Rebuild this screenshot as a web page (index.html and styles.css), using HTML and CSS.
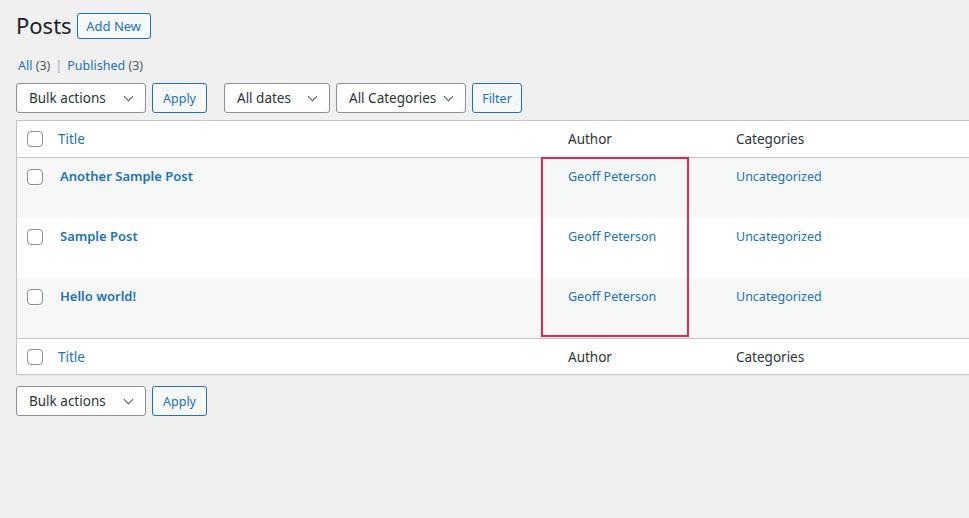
FILE: index.html
```html
<!DOCTYPE html>
<html>
<head>
<meta charset="utf-8">
<link rel="stylesheet" href="styles.css">
</head>
<body>
<div class="wrap">
  <div class="head">
    <h1 class="title">Posts</h1>
    <a class="btn btn-add">Add New</a>
  </div>
  <div class="subsub">
    <a class="lnk">All <span class="count">(3)</span></a>
    <span class="sep">|</span>
    <a class="lnk">Published <span class="count">(3)</span></a>
  </div>
  <div class="tablenav">
    <div class="sel w130">Bulk actions<span class="chev"></span></div>
    <a class="btn btn-apply">Apply</a>
    <div class="gap"></div>
    <div class="sel w106">All dates<span class="chev"></span></div>
    <div class="sel w130">All Categories<span class="chev"></span></div>
    <a class="btn btn-filter">Filter</a>
  </div>
  <div class="tablebox">
    <div class="row hdr">
      <div class="c-cb"><span class="cb"></span></div>
      <div class="c-title"><a class="lnk">Title</a></div>
      <div class="c-author">Author</div>
      <div class="c-cat">Categories</div>
    </div>
    <div class="row post alt">
      <div class="c-cb"><span class="cb"></span></div>
      <div class="c-title"><a class="lnk strong">Another Sample Post</a></div>
      <div class="c-author"><a class="lnk">Geoff Peterson</a></div>
      <div class="c-cat"><a class="lnk">Uncategorized</a></div>
    </div>
    <div class="row post">
      <div class="c-cb"><span class="cb"></span></div>
      <div class="c-title"><a class="lnk strong">Sample Post</a></div>
      <div class="c-author"><a class="lnk">Geoff Peterson</a></div>
      <div class="c-cat"><a class="lnk">Uncategorized</a></div>
    </div>
    <div class="row post alt">
      <div class="c-cb"><span class="cb"></span></div>
      <div class="c-title"><a class="lnk strong">Hello world!</a></div>
      <div class="c-author"><a class="lnk">Geoff Peterson</a></div>
      <div class="c-cat"><a class="lnk">Uncategorized</a></div>
    </div>
    <div class="row ftr">
      <div class="c-cb"><span class="cb"></span></div>
      <div class="c-title"><a class="lnk">Title</a></div>
      <div class="c-author">Author</div>
      <div class="c-cat">Categories</div>
    </div>
    <div class="highlight"></div>
  </div>
  <div class="tablenav bottom">
    <div class="sel w130">Bulk actions<span class="chev"></span></div>
    <a class="btn btn-apply">Apply</a>
  </div>
</div>
</body>
</html>
```
FILE: styles.css
```css
html, body {
  margin: 0;
  padding: 0;
  background: #f0f0f1;
  overflow: hidden;
}
body {
  font-family: "Noto Sans", "Open Sans", sans-serif;
  font-size: 13px;
  color: #3c434a;
}
.wrap {
  padding: 0 0 0 16px;
  width: 1100px;
}
.head {
  display: flex;
  align-items: center;
  gap: 7px;
  padding-top: 13px;
  height: 25px;
}
.title {
  margin: 0;
  font-size: 22px;
  font-weight: 400;
  color: #1d2327;
  line-height: 25px;
  margin-top: -1px;
}
.btn {
  display: inline-flex;
  align-items: center;
  justify-content: center;
  box-sizing: border-box;
  border: 1px solid #2271b1;
  border-radius: 3px;
  color: #2271b1;
  background: #f6f7f7;
  font-size: 12.5px;
  height: 30px;
  padding: 0 10px;
}
.btn-add {
  height: 26px;
  width: 74px;
  padding: 0;
  margin-left: -2px;
  font-size: 13px;
}
.subsub {
  margin-top: 18px;
  padding-left: 2px;
  height: 20px;
  line-height: 20px;
  display: flex;
  gap: 5px;
  font-size: 12.5px;
}
.lnk { color: #2271b1; text-decoration: none; }
.count { color: #50575e; }
.sep { color: #a7aaad; }
.tablenav {
  display: flex;
  gap: 6px;
  height: 30px;
  margin-top: 7px;
}
.tablenav.bottom { margin-top: 11px; }
.gap { width: 5px; }
.sel {
  box-sizing: border-box;
  height: 30px;
  border: 1px solid #8c8f94;
  border-radius: 3px;
  background: #fff;
  color: #2c3338;
  font-size: 13.5px;
  display: flex;
  align-items: center;
  padding-left: 12px;
  position: relative;
}
.w130 { width: 130px; }
.w106 { width: 106px; }
.chev {
  position: absolute;
  right: 13px;
  top: 9px;
  width: 6px;
  height: 6px;
  border-right: 1.5px solid #50575e;
  border-bottom: 1.5px solid #50575e;
  transform: rotate(45deg);
}
.btn-apply { width: 55px; padding: 0; }
.btn-filter { width: 50px; padding: 0; }
.tablebox {
  margin-top: 7px;
  border: 1px solid #c3c4c7;
  background: #fff;
  position: relative;
  box-shadow: 0 1px 1px rgba(0,0,0,.04);
}
.row {
  display: flex;
  align-items: flex-start;
  font-size: 13.5px;
}
.row.hdr { height: 36px; border-bottom: 1px solid #c3c4c7; align-items: center; color: #2c3338; }
.row.ftr { height: 35px; border-top: 1px solid #c3c4c7; align-items: center; color: #2c3338; }
.row.post { height: 60px; }
.row.post.last { height: 59px; }
.row.alt { background: #f6f7f7; }
.c-cb { width: 41px; display: flex; justify-content: flex-start; padding-left: 10px; box-sizing: border-box; }
.post .c-cb { padding-top: 11px; }
.cb {
  display: block;
  box-sizing: border-box;
  width: 16px;
  height: 16px;
  border: 1px solid #8c8f94;
  border-radius: 4px;
  background: #fff;
}
.c-title { width: 510px; }
.post .c-title { padding-top: 9px; padding-left: 2px; width: 508px; }
.c-author { width: 168px; }
.c-cat { flex: 1; }
.post .c-author, .post .c-cat { padding-top: 10px; font-size: 12.5px; }
.strong { font-weight: 600; font-size: 13px; }
.highlight {
  position: absolute;
  left: 524px;
  top: 36px;
  width: 144px;
  height: 176px;
  border: 2px solid #e8234e;
}
```
